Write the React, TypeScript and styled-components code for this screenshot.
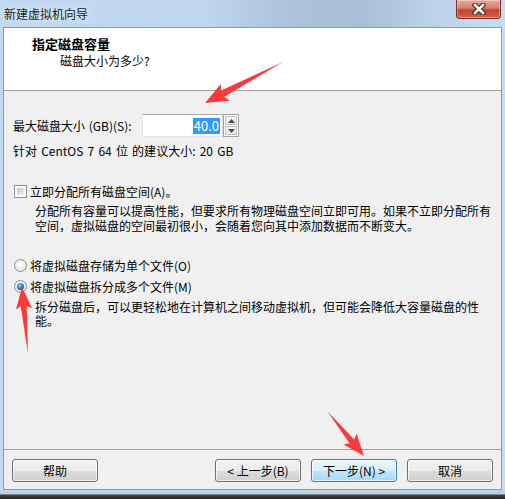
import styled, { createGlobalStyle } from "styled-components";

const GlobalStyle = createGlobalStyle`
  html, body {
    margin: 0;
    padding: 0;
  }
  body {
    width: 505px;
    height: 499px;
    overflow: hidden;
    font-family: "Noto Sans CJK SC", "Noto Sans", sans-serif;
    font-size: 12px;
    color: #000;
  }
`;

const Window = styled.div`
  position: relative;
  width: 505px;
  height: 499px;
  box-sizing: border-box;
  padding: 0 3px;
  display: flex;
  flex-direction: column;
  background: linear-gradient(
    90deg,
    #c2d9f1 0%,
    #bed6ee 40%,
    #abc2da 58%,
    #a9bfd6 72%,
    #bcd2e9 85%,
    #c7dcf1 100%
  );
`;

const TitleBar = styled.div`
  height: 27px;
  display: flex;
  align-items: flex-start;
`;

const Title = styled.div`
  padding-left: 1px;
  line-height: 27px;
  font-size: 12px;
  color: #1a1a1a;
  text-shadow: 0 0 6px rgba(255, 255, 255, 0.9);
`;

const CloseButton = styled.div`
  margin-left: auto;
  margin-right: 1px;
  width: 45px;
  height: 19px;
  box-sizing: border-box;
  border: 1px solid #7a2a22;
  border-top: none;
  border-radius: 0 0 4px 4px;
  background: linear-gradient(180deg, #e9a99b 0%, #d7806f 45%, #c2442f 55%, #d0634c 100%);
  box-shadow: inset 0 0 0 1px rgba(255, 255, 255, 0.35);
  display: flex;
  align-items: center;
  justify-content: center;
`;

const Client = styled.div`
  height: 464px;
  box-sizing: border-box;
  border: 1px solid #8b99a8;
  background: #f0f0f0;
  display: flex;
  flex-direction: column;
`;

const Header = styled.div`
  height: 55px;
  background: #fff;
  border-bottom: 1px solid #a0a0a0;
  padding: 7px 0 0 28px;
  display: flex;
  flex-direction: column;
`;

const HeaderTitle = styled.div`
  font-size: 13px;
  font-weight: 700;
  line-height: 17px;
`;

const HeaderSub = styled.div`
  margin: 1px 0 0 28px;
  line-height: 16px;
`;

const Body = styled.div`
  flex: 1;
  padding-left: 9px;
  display: flex;
  flex-direction: column;
`;

const SizeRow = styled.div`
  margin-top: 23px;
  height: 23px;
  display: flex;
  align-items: center;
`;

const Label = styled.div`
  width: 129px;
  line-height: 16px;
  word-spacing: 1px;
`;

const InputBox = styled.div`
  width: 81px;
  height: 23px;
  box-sizing: border-box;
  border: 1px solid;
  border-color: #abadb3 #dbdfe6 #e3e9ef #e2e3ea;
  background: #fff;
  display: flex;
  align-items: center;
  justify-content: flex-end;
  padding-right: 2px;
`;

const Selected = styled.span`
  background: #3399ff;
  color: #fff;
  font-size: 13px;
  line-height: 16px;
  padding: 0 1px;
`;

const Spinner = styled.div`
  width: 16px;
  height: 23px;
  box-sizing: border-box;
  border: 1px solid #a3a3a3;
  padding: 1px;
  display: flex;
  flex-direction: column;
  gap: 1px;
  background: #fff;
`;

const SpinButton = styled.div`
  flex: 1;
  border: 1px solid #c4c4c4;
  background: linear-gradient(180deg, #f7f7f7, #e3e3e3);
  display: flex;
  align-items: center;
  justify-content: center;
`;

const Line = styled.div<{ $top: number }>`
  margin-top: ${(p) => p.$top}px;
  line-height: 15px;
  word-spacing: 1.5px;
`;

const Desc = styled.div<{ $top: number; $lh: number }>`
  margin: ${(p) => p.$top}px 0 0 22px;
  font-family: "Liberation Sans", "Noto Sans CJK SC", sans-serif;
  line-height: ${(p) => p.$lh}px;
`;

const OptionRow = styled.div<{ $top: number }>`
  margin-top: ${(p) => p.$top}px;
  height: 16px;
  display: flex;
  align-items: center;
  gap: 3px;
`;

const CheckBox = styled.div`
  margin-left: 1px;
  width: 13px;
  height: 13px;
  box-sizing: border-box;
  border: 1px solid #8e8f8f;
  padding: 2px;
  background: #fff;

  &::after {
    content: "";
    display: block;
    width: 100%;
    height: 100%;
    background: linear-gradient(135deg, #b9c8dc, #eef3f8);
  }
`;

const Radio = styled.div<{ $checked?: boolean }>`
  margin-left: 1px;
  width: 13px;
  height: 13px;
  box-sizing: border-box;
  border-radius: 50%;
  border: 1px solid #8e8f8f;
  background: radial-gradient(circle at 50% 40%, #ffffff 0%, #e6e6e6 70%, #cfcfcf 100%);
  display: flex;
  align-items: center;
  justify-content: center;

  &::after {
    content: "";
    display: ${(p) => (p.$checked ? "block" : "none")};
    width: 7px;
    height: 7px;
    border-radius: 50%;
    background: radial-gradient(circle at 40% 35%, #8fd0ff 0%, #2a7fd0 45%, #0b3a78 100%);
  }
`;

const Footer = styled.div`
  border-top: 1px solid #a0a0a0;
  padding: 9px 8px 7px 8px;
  display: flex;
  gap: 10px;
`;

const Button = styled.div<{ $default?: boolean }>`
  width: 86px;
  height: 23px;
  box-sizing: border-box;
  border: 1px solid ${(p) => (p.$default ? "#3c7fb1" : "#707070")};
  border-radius: 3px;
  background: ${(p) =>
    p.$default
      ? "linear-gradient(180deg, #eaf6fd 0%, #d9f0fc 50%, #bee6fd 51%, #a7d9f5 100%)"
      : "linear-gradient(180deg, #f2f2f2 0%, #ebebeb 50%, #dddddd 51%, #cfcfcf 100%)"};
  box-shadow: inset 0 0 0 1px rgba(255, 255, 255, 0.7);
  display: flex;
  align-items: center;
  justify-content: center;
  line-height: 16px;
`;

const Spacer = styled.div`
  flex: 1;
`;

const BottomFrame = styled.div`
  height: 9px;
  margin: 0 -3px;
  background: linear-gradient(180deg, #bcd3ea 0px, #b6cde4 4px, #3b3f44 5px, #2a2a2a 9px);
`;

const Overlay = styled.svg`
  position: absolute;
  left: 0;
  top: 0;
  pointer-events: none;
`;

function arrow(tx: number, ty: number, px: number, py: number, headLen: number, headW: number, shaftW: number) {
  const dx = px - tx;
  const dy = py - ty;
  const len = Math.hypot(dx, dy);
  const ux = dx / len;
  const uy = dy / len;
  const nx = -uy;
  const ny = ux;
  const bx = px - ux * headLen;
  const by = py - uy * headLen;
  const cx = bx - ux * 3;
  const cy = by - uy * 3;
  const pts = [
    [tx, ty],
    [bx + (nx * shaftW) / 2, by + (ny * shaftW) / 2],
    [cx + (nx * headW) / 2, cy + (ny * headW) / 2],
    [px, py],
    [cx - (nx * headW) / 2, cy - (ny * headW) / 2],
    [bx - (nx * shaftW) / 2, by - (ny * shaftW) / 2],
  ];
  return pts.map((p) => p.map((v) => v.toFixed(1)).join(",")).join(" ");
}

function App() {
  return (
    <>
      <GlobalStyle />
      <Window>
        <TitleBar>
          <Title>新建虚拟机向导</Title>
          <CloseButton>
            <svg width="14" height="12" viewBox="0 0 14 12">
              <path d="M3 2 L11 10 M11 2 L3 10" stroke="#4a2a26" strokeWidth="5" strokeLinecap="square" />
              <path d="M3 2 L11 10 M11 2 L3 10" stroke="#ffffff" strokeWidth="2.6" strokeLinecap="square" />
            </svg>
          </CloseButton>
        </TitleBar>
        <Client>
          <Header>
            <HeaderTitle>指定磁盘容量</HeaderTitle>
            <HeaderSub>磁盘大小为多少?</HeaderSub>
          </Header>
          <Body>
            <SizeRow>
              <Label>最大磁盘大小 (GB)(S):</Label>
              <InputBox>
                <Selected>40.0</Selected>
              </InputBox>
              <Spinner>
                <SpinButton>
                  <svg width="7" height="4" viewBox="0 0 7 4">
                    <path d="M0 4 L3.5 0 L7 4 Z" fill="#3c4f6a" />
                  </svg>
                </SpinButton>
                <SpinButton>
                  <svg width="7" height="4" viewBox="0 0 7 4">
                    <path d="M0 0 L3.5 4 L7 0 Z" fill="#3c4f6a" />
                  </svg>
                </SpinButton>
              </Spinner>
            </SizeRow>
            <Line $top={6}>针对 CentOS 7 64 位 的建议大小: 20 GB</Line>
            <OptionRow $top={25}>
              <CheckBox />
              <span>立即分配所有磁盘空间(A)。</span>
            </OptionRow>
            <Desc $top={6} $lh={15}>
              分配所有容量可以提高性能，但要求所有物理磁盘空间立即可用。如果不立即分配所有
              <br />
              空间，虚拟磁盘的空间最初很小，会随着您向其中添加数据而不断变大。
            </Desc>
            <OptionRow $top={22}>
              <Radio />
              <span>将虚拟磁盘存储为单个文件(O)</span>
            </OptionRow>
            <OptionRow $top={5}>
              <Radio $checked />
              <span>将虚拟磁盘拆分成多个文件(M)</span>
            </OptionRow>
            <Desc $top={7} $lh={14}>
              拆分磁盘后，可以更轻松地在计算机之间移动虚拟机，但可能会降低大容量磁盘的性
              <br />
              能。
            </Desc>
          </Body>
          <Footer>
            <Button>帮助</Button>
            <Spacer />
            <Button>&lt; 上一步(B)</Button>
            <Button $default>下一步(N) &gt;</Button>
            <Button>取消</Button>
          </Footer>
        </Client>
        <BottomFrame />
        <Overlay width="505" height="499" viewBox="0 0 505 499">
          <polygon points={arrow(283, 62, 205, 103, 20, 19, 7)} fill="#f83a3a" />
          <polygon points={arrow(28, 353, 22, 287, 19, 16, 6)} fill="#f83a3a" />
          <polygon points={arrow(327, 411, 364, 456, 19, 17, 6)} fill="#f83a3a" />
        </Overlay>
      </Window>
    </>
  );
}

export default App;
